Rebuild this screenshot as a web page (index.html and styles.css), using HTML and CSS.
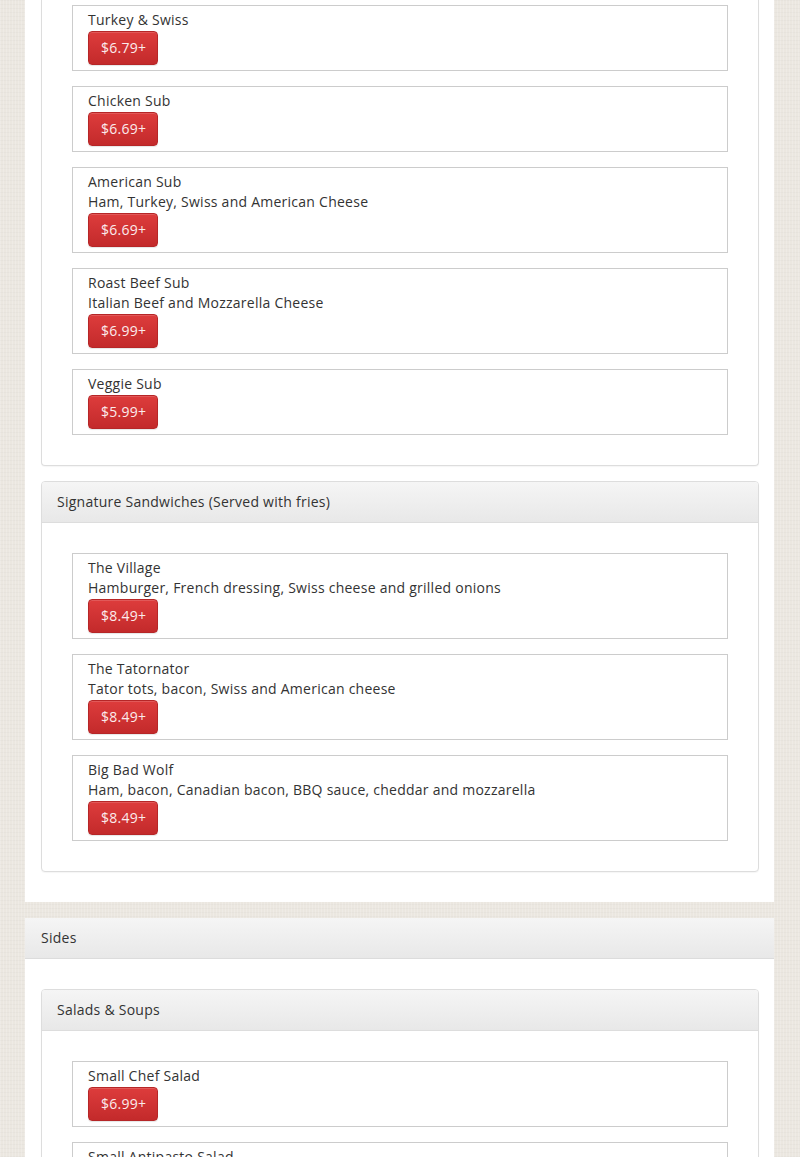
FILE: index.html
```html
<!DOCTYPE html>
<html>
<head>
<meta charset="utf-8">
<link rel="stylesheet" href="styles.css">
</head>
<body>
<div class="page">
  <div class="outer">
    <div class="outer-body">
      <div class="inner inner-cont">
        <div class="inner-body cont-body">
          <div class="item"><div class="name">Turkey &amp; Swiss</div><span class="btn">$6.79+</span></div>
          <div class="item"><div class="name">Chicken Sub</div><span class="btn">$6.69+</span></div>
          <div class="item"><div class="name">American Sub</div><div class="desc">Ham, Turkey, Swiss and American Cheese</div><span class="btn">$6.69+</span></div>
          <div class="item"><div class="name">Roast Beef Sub</div><div class="desc">Italian Beef and Mozzarella Cheese</div><span class="btn">$6.99+</span></div>
          <div class="item"><div class="name">Veggie Sub</div><span class="btn">$5.99+</span></div>
        </div>
      </div>
      <div class="inner">
        <div class="heading">Signature Sandwiches (Served with fries)</div>
        <div class="inner-body">
          <div class="item"><div class="name">The Village</div><div class="desc">Hamburger, French dressing, Swiss cheese and grilled onions</div><span class="btn">$8.49+</span></div>
          <div class="item"><div class="name">The Tatornator</div><div class="desc">Tator tots, bacon, Swiss and American cheese</div><span class="btn">$8.49+</span></div>
          <div class="item"><div class="name">Big Bad Wolf</div><div class="desc">Ham, bacon, Canadian bacon, BBQ sauce, cheddar and mozzarella</div><span class="btn">$8.49+</span></div>
        </div>
      </div>
    </div>
  </div>
  <div class="outer">
    <div class="outer-heading">Sides</div>
    <div class="outer-body">
      <div class="inner">
        <div class="heading">Salads &amp; Soups</div>
        <div class="inner-body">
          <div class="item"><div class="name">Small Chef Salad</div><span class="btn">$6.99+</span></div>
          <div class="item"><div class="name">Small Antipasto Salad</div><span class="btn">$6.99+</span></div>
        </div>
      </div>
    </div>
  </div>
</div>
</body>
</html>
```
FILE: styles.css
```css
html, body {
  margin: 0;
  padding: 0;
}
body {
  background-color: #ebe7e0;
  background-image:
    repeating-linear-gradient(90deg, rgba(255,255,255,0.18) 0 1px, rgba(0,0,0,0) 1px 3px),
    repeating-linear-gradient(0deg, rgba(0,0,0,0.02) 0 1px, rgba(0,0,0,0) 1px 4px);
  font-family: "Open Sans", "Liberation Sans", sans-serif;
  font-size: 14px;
  line-height: 20px;
  letter-spacing: 0.25px;
  color: #333;
  height: 1157px;
  overflow: hidden;
}
.page {
  padding: 0 26px 0 25px;
}
.outer {
  background: #fff;
  margin-bottom: 16px;
}
.outer-heading {
  padding: 10px 16px 10px;
  background: linear-gradient(#f5f5f5, #e8e8e8);
  border-bottom: 1px solid #dcdcdc;
  color: #333;
}
.outer-body {
  padding: 30px 15px 30px 16px;
}
.outer:first-child .outer-body {
  padding-top: 0;
}
.inner {
  border: 1px solid #ddd;
  border-radius: 4px;
  margin-bottom: 15px;
  background: #fff;
  box-shadow: 0 1px 1px rgba(0,0,0,0.04);
}
.inner:last-child {
  margin-bottom: 0;
}
.inner-cont {
  border-top: none;
  border-top-left-radius: 0;
  border-top-right-radius: 0;
}
.heading {
  padding: 10px 15px;
  background: linear-gradient(#f5f5f5, #e8e8e8);
  border-bottom: 1px solid #ddd;
  border-radius: 3px 3px 0 0;
}
.inner-body {
  padding: 30px 30px 30px 30px;
}
.cont-body {
  padding-top: 5px;
}
.item {
  border: 1px solid #ccc;
  padding: 4px 15px 5px;
  margin-bottom: 15px;
}
.item:last-child {
  margin-bottom: 0;
}
.name, .desc {
  line-height: 20px;
}
.btn {
  display: inline-block;
  margin-top: 1px;
  height: 34px;
  line-height: 32px;
  box-sizing: border-box;
  padding: 0 11px 0 12px;
  color: #fbecec;
  background: linear-gradient(#dd3c3c, #c32a2b);
  border: 1px solid #b62627;
  border-radius: 4px;
  box-shadow: inset 0 1px 0 rgba(255,255,255,0.15), 0 1px 1px rgba(0,0,0,0.1);
  vertical-align: top;
}
```
